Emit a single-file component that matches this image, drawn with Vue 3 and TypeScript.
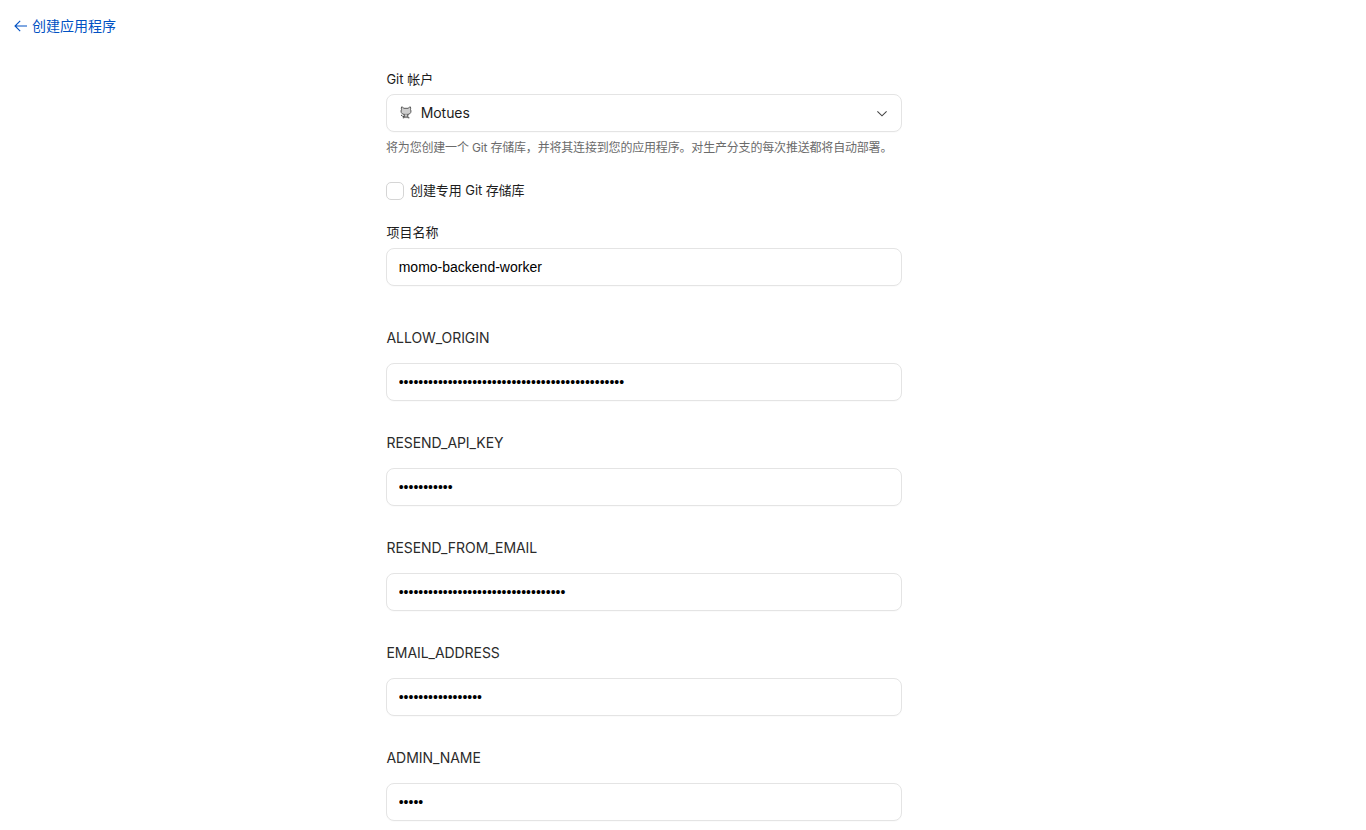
<script setup lang="ts">
import { ref } from 'vue'

interface Secret {
  name: string
  value: string
}

const projectName = ref('momo-backend-worker')
const privateRepo = ref(false)
const secrets = ref<Secret[]>([
  { name: 'ALLOW_ORIGIN', value: 'x'.repeat(46) },
  { name: 'RESEND_API_KEY', value: 'x'.repeat(11) },
  { name: 'RESEND_FROM_EMAIL', value: 'x'.repeat(34) },
  { name: 'EMAIL_ADDRESS', value: 'x'.repeat(17) },
  { name: 'ADMIN_NAME', value: 'x'.repeat(5) },
])
</script>

<template>
  <div class="page">
    <a class="back">
      <svg width="14" height="14" viewBox="0 0 14 14" fill="none" stroke="currentColor" stroke-width="1.1">
        <path d="M13 7H1.3M6.2 1.8 1 7l5.2 5.2" />
      </svg>
      <span>创建应用程序</span>
    </a>
    <form class="form" @submit.prevent>
      <label class="label">Git 帐户</label>
      <button type="button" class="field select">
        <svg class="cat" width="12" height="13" viewBox="0 0 12 13">
          <path d="M1.6.9Q2.8 1 3.9 2.3h4.2Q9.2 1 10.4.9q.5 1.3.1 2.5.9 1.6.2 3.2Q9.8 8.3 8 8.4H4Q2.2 8.3 1.3 6.6.6 5 1.5 3.4 1.1 2.2 1.6.9z" fill="#cecece" stroke="#4a4a4a" stroke-width=".9" />
          <path d="M4.2 8.4v3.4h3.6V8.4z" fill="#c8c8c8" />
          <path d="M4.2 8.4v3.4H2.8M7.8 8.4v3.4h1.6M4.2 10.6H2.9Q2.2 9.3 1 9.1M6 10.3v1.8" fill="none" stroke="#333" stroke-width=".9" />
        </svg>
        <span class="account">Motues</span>
        <svg class="chevron" width="12" height="8" viewBox="0 0 12 8" fill="none" stroke="#444" stroke-width="1.1">
          <path d="m1.4 1.4 4.6 4.4 4.6-4.4" />
        </svg>
      </button>
      <p class="hint">将为您创建一个 Git 存储库，并将其连接到您的应用程序。对生产分支的每次推送都将自动部署。</p>
      <label class="check">
        <input v-model="privateRepo" type="checkbox" />
        <span>创建专用 Git 存储库</span>
      </label>
      <label class="label project">项目名称</label>
      <input v-model="projectName" class="field" type="text" spellcheck="false" />
      <div class="secrets">
        <div v-for="s in secrets" :key="s.name" class="secret">
          <label class="key">{{ s.name }}</label>
          <input v-model="s.value" class="field" type="password" autocomplete="off" />
        </div>
      </div>
    </form>
  </div>
</template>

<style>
body {
  background: #fff;
  overflow: hidden;
}
</style>

<style scoped>
.page {
  box-sizing: border-box;
  height: 830px;
  overflow: hidden;
  padding-top: 16px;
  font-family: Inter, "Noto Sans CJK SC", sans-serif;
  color: #1d1d1d;
}
.back {
  display: flex;
  align-items: center;
  gap: 4px;
  height: 20px;
  margin-left: 14px;
  font-size: 14px;
  line-height: 20px;
  color: #0051c3;
}
.form {
  width: 516px;
  margin: 34px 0 0 386px;
}
.label {
  display: block;
  height: 18px;
  margin-bottom: 6px;
  padding-left: 0.4px;
  font-size: 13px;
  line-height: 18px;
}
.project {
  height: 17px;
  margin-bottom: 7px;
  line-height: 16px;
}
.field {
  display: block;
  box-sizing: border-box;
  width: 516px;
  height: 38px;
  margin: 0;
  padding: 0 12px 0 11.7px;
  border: 1px solid #e4e4e4;
  border-radius: 8px;
  outline: none;
  background: #fff;
  color: #000;
  font: 14px "Liberation Sans", Arial, sans-serif;
  box-shadow: 0 1px 1px rgba(0, 0, 0, 0.02);
}
.select {
  display: flex;
  align-items: center;
  font-family: Inter, sans-serif;
  color: #1d1d1d;
}
.cat {
  margin: -1px 9px 0 1px;
}
.account {
  margin-top: -2px;
  letter-spacing: -0.06px;
}
.chevron {
  margin: 1px 1px 0 auto;
}
.hint {
  height: 18px;
  margin: 7px 0 0;
  font-size: 12px;
  line-height: 18px;
  letter-spacing: -0.18px;
  color: #6b6b6b;
  white-space: nowrap;
}
.check {
  display: flex;
  align-items: center;
  gap: 6px;
  height: 18px;
  margin: 25px 0 24px;
  font-size: 13px;
  line-height: 18px;
}
.check input {
  box-sizing: border-box;
  width: 18px;
  height: 18px;
  margin: 0;
  appearance: none;
  border: 1px solid #d5d5d5;
  border-radius: 5px;
  background: #fff;
}
.check span {
  margin-top: -2px;
  letter-spacing: -0.08px;
}
.secrets {
  display: grid;
  gap: 32px;
  margin-top: 42px;
}
.key {
  display: block;
  height: 20px;
  margin-bottom: 15px;
  padding-left: 0.5px;
  font-size: 14px;
  line-height: 20px;
  letter-spacing: -0.06px;
  color: #2b2b2b;
}
</style>
